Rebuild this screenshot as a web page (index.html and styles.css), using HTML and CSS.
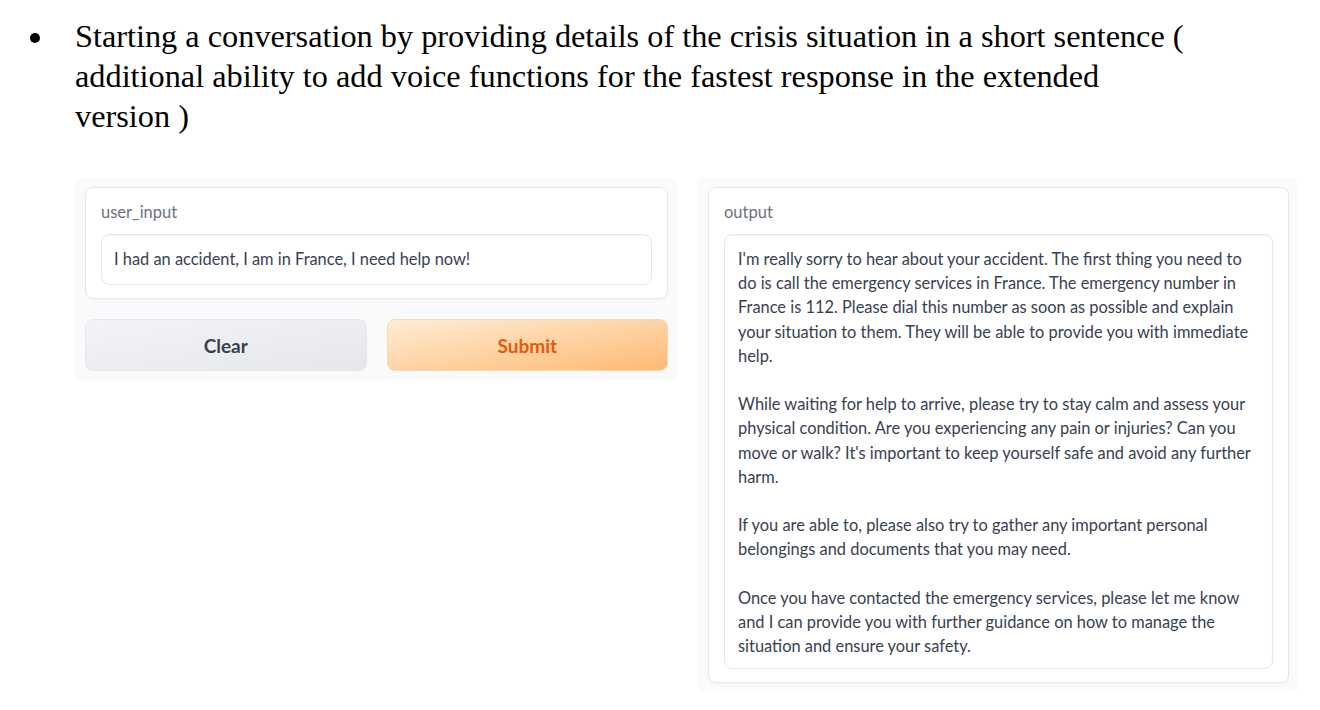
FILE: index.html
```html
<!DOCTYPE html>
<html lang="en">
<head>
<meta charset="utf-8">
<title>Crisis assistant</title>
<link rel="stylesheet" href="styles.css">
</head>
<body>
<ul class="intro">
  <li>Starting a conversation by providing details of the crisis situation in a short sentence (<br>additional ability to add voice functions for the fastest response in the extended<br>version )</li>
</ul>
<div class="app">
  <div class="panel left">
    <div class="card">
      <div class="label">user_input</div>
      <div class="field">I had an accident, I am in France, I need help now!</div>
    </div>
    <div class="buttons">
      <button class="btn clear">Clear</button>
      <button class="btn submit">Submit</button>
    </div>
  </div>
  <div class="panel right">
    <div class="card out">
      <div class="label">output</div>
      <div class="field area"><p>I'm really sorry to hear about your accident. The first thing you need to<br>do is call the emergency services in France. The emergency number in<br>France is 112. Please dial this number as soon as possible and explain<br>your situation to them. They will be able to provide you with immediate<br>help.</p><p>While waiting for help to arrive, please try to stay calm and assess your<br>physical condition. Are you experiencing any pain or injuries? Can you<br>move or walk? It's important to keep yourself safe and avoid any further<br>harm.</p><p>If you are able to, please also try to gather any important personal<br>belongings and documents that you may need.</p><p>Once you have contacted the emergency services, please let me know<br>and I can provide you with further guidance on how to manage the<br>situation and ensure your safety.</p></div>
    </div>
  </div>
</div>
</body>
</html>
```

FILE: styles.css
```css
html, body {
  margin: 0;
  padding: 0;
  background: #ffffff;
}
body {
  width: 1320px;
  height: 710px;
  overflow: hidden;
}
.intro {
  margin: 0;
  padding: 16px 0 0 75px;
  font-family: "Liberation Serif", "Times New Roman", serif;
  font-size: 32.3px;
  line-height: 40px;
  color: #000;
  list-style: none;
}
.intro li {
  position: relative;
}
.intro li::before {
  content: "";
  position: absolute;
  left: -45px;
  top: 17px;
  width: 10px;
  height: 10px;
  border-radius: 50%;
  background: #000;
}
.app {
  display: flex;
  align-items: flex-start;
  gap: 21px;
  margin: 42px 0 0 75px;
  font-family: "Lato", "Noto Sans", sans-serif;
}
.panel {
  background: #f9fafb;
  border-radius: 6px;
  padding: 9px 9px 9px 10px;
  box-sizing: border-box;
}
.left {
  width: 602px;
}
.right {
  width: 600px;
  padding-bottom: 8px;
}
.card {
  background: #fff;
  border: 1px solid #e5e7eb;
  border-radius: 8px;
  padding: 13px 15px 13px 15px;
  box-shadow: 0 1px 2px rgba(0,0,0,0.04);
}
.label {
  font-size: 16.5px;
  color: #6b7280;
  line-height: 22px;
  margin-bottom: 11px;
}
.field {
  border: 1px solid #e5e7eb;
  border-radius: 8px;
  padding: 12px 12px 13px 12px;
  font-size: 16.4px;
  line-height: 24px;
  color: #374151;
  box-shadow: inset 0 1px 2px rgba(0,0,0,0.04);
}
.area {
  padding: 12px 12px 10px 13px;
  line-height: 24.2px;
}
.area p {
  margin: 0 0 24.2px 0;
}
.area p:last-child {
  margin-bottom: 0;
}
.buttons {
  display: flex;
  gap: 20px;
  margin-top: 20px;
}
.btn {
  flex: 1;
  height: 52px;
  border-radius: 8px;
  font-family: "Lato", "Noto Sans", sans-serif;
  font-size: 19px;
  font-weight: 700;
  cursor: pointer;
}
.clear {
  background: linear-gradient(to bottom right, #f3f4f6, #e5e7eb);
  border: 1px solid #e5e7eb;
  color: #374151;
}
.submit {
  background: linear-gradient(to bottom right, #ffedd5, #fdba74);
  border: 1px solid #fed7aa;
  color: #ea580c;
}
```
